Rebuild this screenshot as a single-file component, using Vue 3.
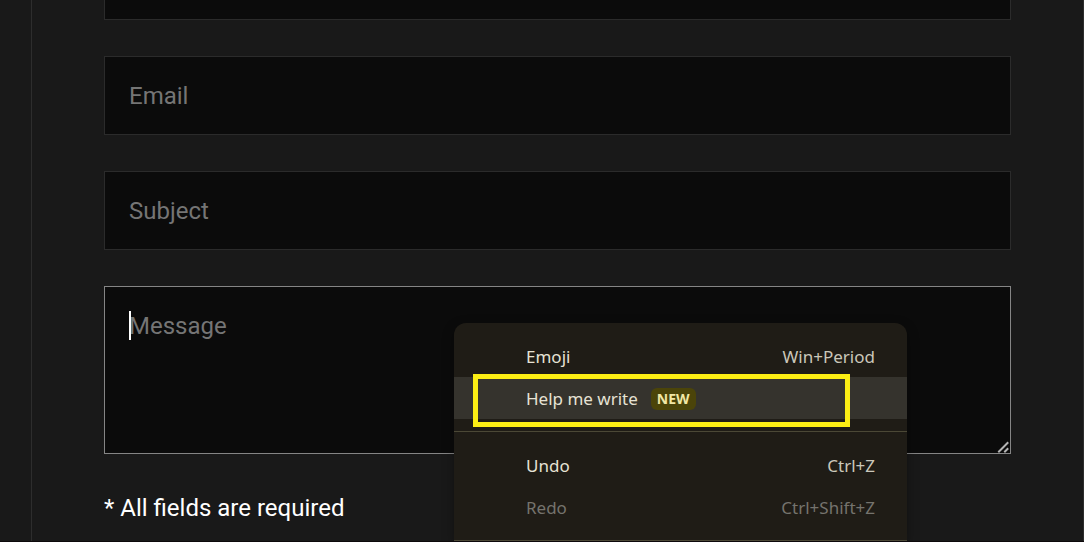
<script setup>
import { ref } from 'vue'

const form = ref({ name: '', email: '', subject: '', message: '' })

const fields = [
  { key: 'name', label: 'Name', type: 'text' },
  { key: 'email', label: 'Email', type: 'email' },
  { key: 'subject', label: 'Subject', type: 'text' }
]

const groups = [
  [
    { label: 'Emoji', shortcut: 'Win+Period' },
    { label: 'Help me write', badge: 'NEW', active: true }
  ],
  [
    { label: 'Undo', shortcut: 'Ctrl+Z' },
    { label: 'Redo', shortcut: 'Ctrl+Shift+Z', disabled: true }
  ]
]
</script>

<template>
  <main class="page">
    <form class="contact" @submit.prevent>
      <input
        v-for="field in fields"
        :key="field.key"
        v-model="form[field.key]"
        class="field"
        :type="field.type"
        :placeholder="field.label"
        :aria-label="field.label"
      />

      <div class="message">
        <textarea
          v-model="form.message"
          class="field field-area"
          placeholder="Message"
          aria-label="Message"
        ></textarea>
        <span class="caret"></span>
        <svg class="grip" viewBox="0 0 12 12">
          <path d="M2 10.5 L10.5 2 M8 10.5 L10.5 8" />
        </svg>

        <div class="menu" role="menu">
          <div v-for="(group, g) in groups" :key="g" class="menu-group">
            <button
              v-for="item in group"
              :key="item.label"
              type="button"
              role="menuitem"
              class="menu-item"
              :class="{ active: item.active }"
              :disabled="item.disabled"
            >
              <span class="menu-label">{{ item.label }}</span>
              <span v-if="item.badge" class="badge">{{ item.badge }}</span>
              <span v-if="item.shortcut" class="shortcut">{{ item.shortcut }}</span>
            </button>
          </div>
          <div class="highlight"></div>
        </div>
      </div>

      <p class="note">* All fields are required</p>
    </form>
  </main>
</template>

<style>
body {
  margin: 0;
  background: #191919;
}
</style>

<style scoped>
.page {
  box-sizing: border-box;
  height: 100vh;
  overflow: hidden;
  padding-left: 31px;
  background: #191919;
  border-bottom: 1px solid #0d090b;
  font-family: Roboto, 'Liberation Sans', sans-serif;
}

/* scrolled down so that only the foot of the first field shows */
.contact {
  display: flex;
  flex-direction: column;
  gap: 36px;
  margin-top: -59px;
  padding: 0 72px 36px;
  border-left: 1px solid #2d2d2d;
  border-right: 1px solid #2d2d2d;
}

.field {
  display: block;
  box-sizing: border-box;
  width: 100%;
  height: 79px;
  margin: 0;
  padding: 24px;
  background: #0b0b0b;
  border: 1px solid #2b2b2b;
  border-radius: 0;
  outline: none;
  color: #fff;
  font-family: inherit;
  font-size: 24px;
  line-height: 30px;
}

.field::placeholder {
  color: #757575;
  opacity: 1;
}

.message {
  position: relative;
}

.field-area {
  height: 168px;
  border-color: #858585;
  resize: none;
}

.caret {
  position: absolute;
  left: 25px;
  top: 25px;
  width: 2px;
  height: 29px;
  background: #fff;
}

.grip {
  position: absolute;
  right: 2px;
  bottom: 1px;
  width: 12px;
  height: 12px;
  fill: none;
  stroke: #b4b4b4;
  stroke-width: 2;
  stroke-linecap: square;
}

.note {
  margin: 4px 0 0;
  color: #fff;
  font-size: 24px;
  line-height: 28px;
}

.menu {
  position: absolute;
  left: 350px;
  top: 37px;
  width: 453px;
  background: #1f1c16;
  border-radius: 12px 12px 0 0;
  box-shadow: 0 4px 12px rgba(0, 0, 0, 0.35);
  font-family: 'Noto Sans', 'Open Sans', sans-serif;
}

.menu-group {
  padding: 12px 0;
  border-bottom: 1px solid #4b4836;
}

.menu-item {
  display: flex;
  align-items: center;
  width: 100%;
  height: 42px;
  padding: 2px 32px 0 72px;
  background: none;
  border: 0;
  color: #e6e2d4;
  font-family: inherit;
  font-size: 17px;
  line-height: 24px;
  text-align: left;
}

.menu-item.active {
  background: #35332d;
}

.menu-item:disabled {
  color: #75736d;
}

.badge {
  margin-left: 13px;
  padding: 0 6px;
  background: #4b4409;
  border-radius: 6px;
  color: #f1e7a5;
  font-size: 14px;
  font-weight: 700;
  line-height: 22px;
}

.shortcut {
  margin-left: auto;
  color: #cbc7ba;
}

.menu-item:disabled .shortcut {
  color: inherit;
}

.highlight {
  position: absolute;
  left: 19px;
  top: 51px;
  box-sizing: border-box;
  width: 377px;
  height: 53px;
  border: 5px solid #fcee14;
  pointer-events: none;
}
</style>
